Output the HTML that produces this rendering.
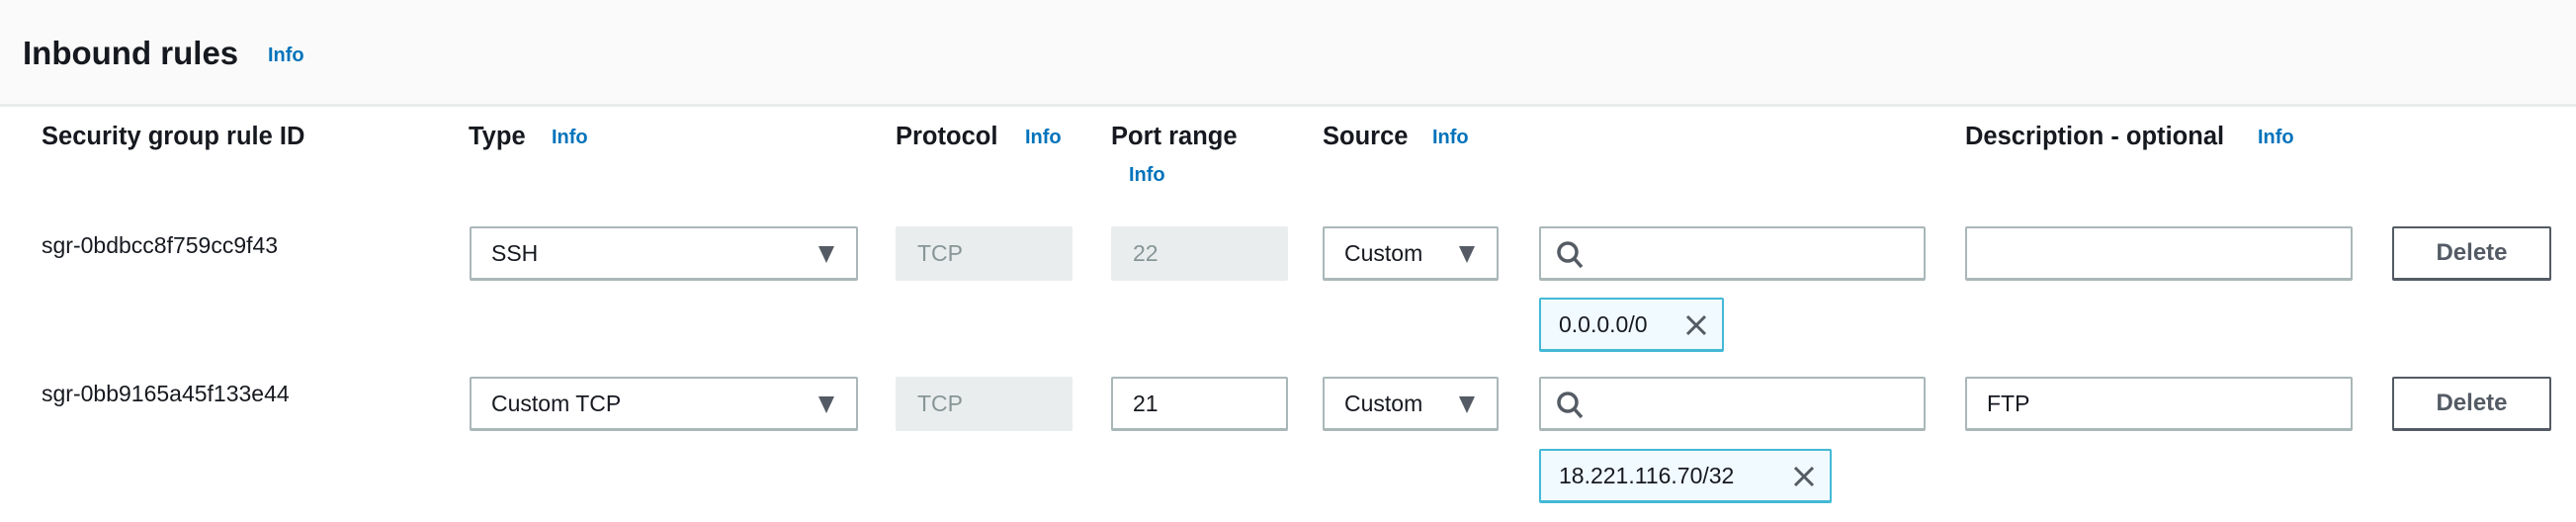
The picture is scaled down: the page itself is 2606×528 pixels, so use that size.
<!DOCTYPE html>
<html><head><meta charset="utf-8"><style>
*{margin:0;padding:0;box-sizing:border-box}
body{width:2606px;height:528px;background:#fff;font-family:"Liberation Sans",sans-serif;color:#16191f;position:relative;overflow:hidden}
.a{position:absolute;white-space:nowrap}
.hdr{left:0;top:0;width:2606px;height:108px;background:#fafafa;border-bottom:3px solid #eaeded}
.t{font-weight:bold;font-size:33px}
.h{font-weight:bold;font-size:25.5px}
.i{color:#0073bb;font-weight:bold;font-size:20px}
.b{font-size:23px}
.box{position:absolute;height:55px;border:2px solid #aab7b8;border-bottom-width:3px;background:#fff;border-radius:2px;font-size:23px;line-height:50px;padding-left:20px}
.dis{background:#eaeded;border-color:#eaeded;color:#879596}
.arrow{position:absolute;right:22px;top:18px;width:0;height:0;border-left:8px solid transparent;border-right:8px solid transparent;border-top:17px solid #545b64}
.del{border-color:#545b64;font-weight:bold;color:#545b64;padding:0;text-align:center;font-size:24px}
.tok{position:absolute;height:55px;background:#f1faff;border:2px solid #44b9d6;border-bottom-width:3px;font-size:23px;line-height:50px;padding-left:18px;border-radius:2px}
</style></head><body>
<div class="a hdr"></div>
<div class="a t" style="left:23px;top:35px">Inbound rules</div>
<div class="a i" style="left:271px;top:45px">Info</div>

<div class="a h" style="left:42px;top:124px">Security group rule ID</div>
<div class="a h" style="left:474px;top:124px">Type</div>
<div class="a i" style="left:558px;top:128px">Info</div>
<div class="a h" style="left:906px;top:124px">Protocol</div>
<div class="a i" style="left:1037px;top:128px">Info</div>
<div class="a h" style="left:1124px;top:124px">Port range</div>
<div class="a i" style="left:1142px;top:166px">Info</div>
<div class="a h" style="left:1338px;top:124px">Source</div>
<div class="a i" style="left:1449px;top:128px">Info</div>
<div class="a h" style="left:1988px;top:124px">Description - optional</div>
<div class="a i" style="left:2284px;top:128px">Info</div>

<!-- row 1 -->
<div class="a b" style="left:42px;top:235px">sgr-0bdbcc8f759cc9f43</div>
<div class="box" style="left:475px;top:229px;width:393px">SSH<div class="arrow"></div></div>
<div class="box dis" style="left:906px;top:229px;width:179px">TCP</div>
<div class="box dis" style="left:1124px;top:229px;width:179px">22</div>
<div class="box" style="left:1338px;top:229px;width:178px">Custom<div class="arrow"></div></div>
<div class="box" style="left:1557px;top:229px;width:391px"><svg style="position:absolute;left:15px;top:12px" width="30" height="30" viewBox="0 0 30 30"><circle cx="12" cy="12" r="9" fill="none" stroke="#545b64" stroke-width="3.5"/><line x1="18" y1="18" x2="26" y2="27" stroke="#545b64" stroke-width="3.5"/></svg></div>
<div class="box" style="left:1988px;top:229px;width:392px"></div>
<div class="box del" style="left:2420px;top:229px;width:161px">Delete</div>
<div class="tok" style="left:1557px;top:301px;width:187px">0.0.0.0/0<svg style="position:absolute;right:14px;top:14px" width="24" height="24" viewBox="0 0 24 24"><path d="M3 3L21 21M21 3L3 21" stroke="#545b64" stroke-width="3"/></svg></div>

<!-- row 2 -->
<div class="a b" style="left:42px;top:385px">sgr-0bb9165a45f133e44</div>
<div class="box" style="left:475px;top:381px;width:393px">Custom TCP<div class="arrow"></div></div>
<div class="box dis" style="left:906px;top:381px;width:179px">TCP</div>
<div class="box" style="left:1124px;top:381px;width:179px">21</div>
<div class="box" style="left:1338px;top:381px;width:178px">Custom<div class="arrow"></div></div>
<div class="box" style="left:1557px;top:381px;width:391px"><svg style="position:absolute;left:15px;top:12px" width="30" height="30" viewBox="0 0 30 30"><circle cx="12" cy="12" r="9" fill="none" stroke="#545b64" stroke-width="3.5"/><line x1="18" y1="18" x2="26" y2="27" stroke="#545b64" stroke-width="3.5"/></svg></div>
<div class="box" style="left:1988px;top:381px;width:392px">FTP</div>
<div class="box del" style="left:2420px;top:381px;width:161px">Delete</div>
<div class="tok" style="left:1557px;top:454px;width:296px">18.221.116.70/32<svg style="position:absolute;right:14px;top:14px" width="24" height="24" viewBox="0 0 24 24"><path d="M3 3L21 21M21 3L3 21" stroke="#545b64" stroke-width="3"/></svg></div>
</body></html>
